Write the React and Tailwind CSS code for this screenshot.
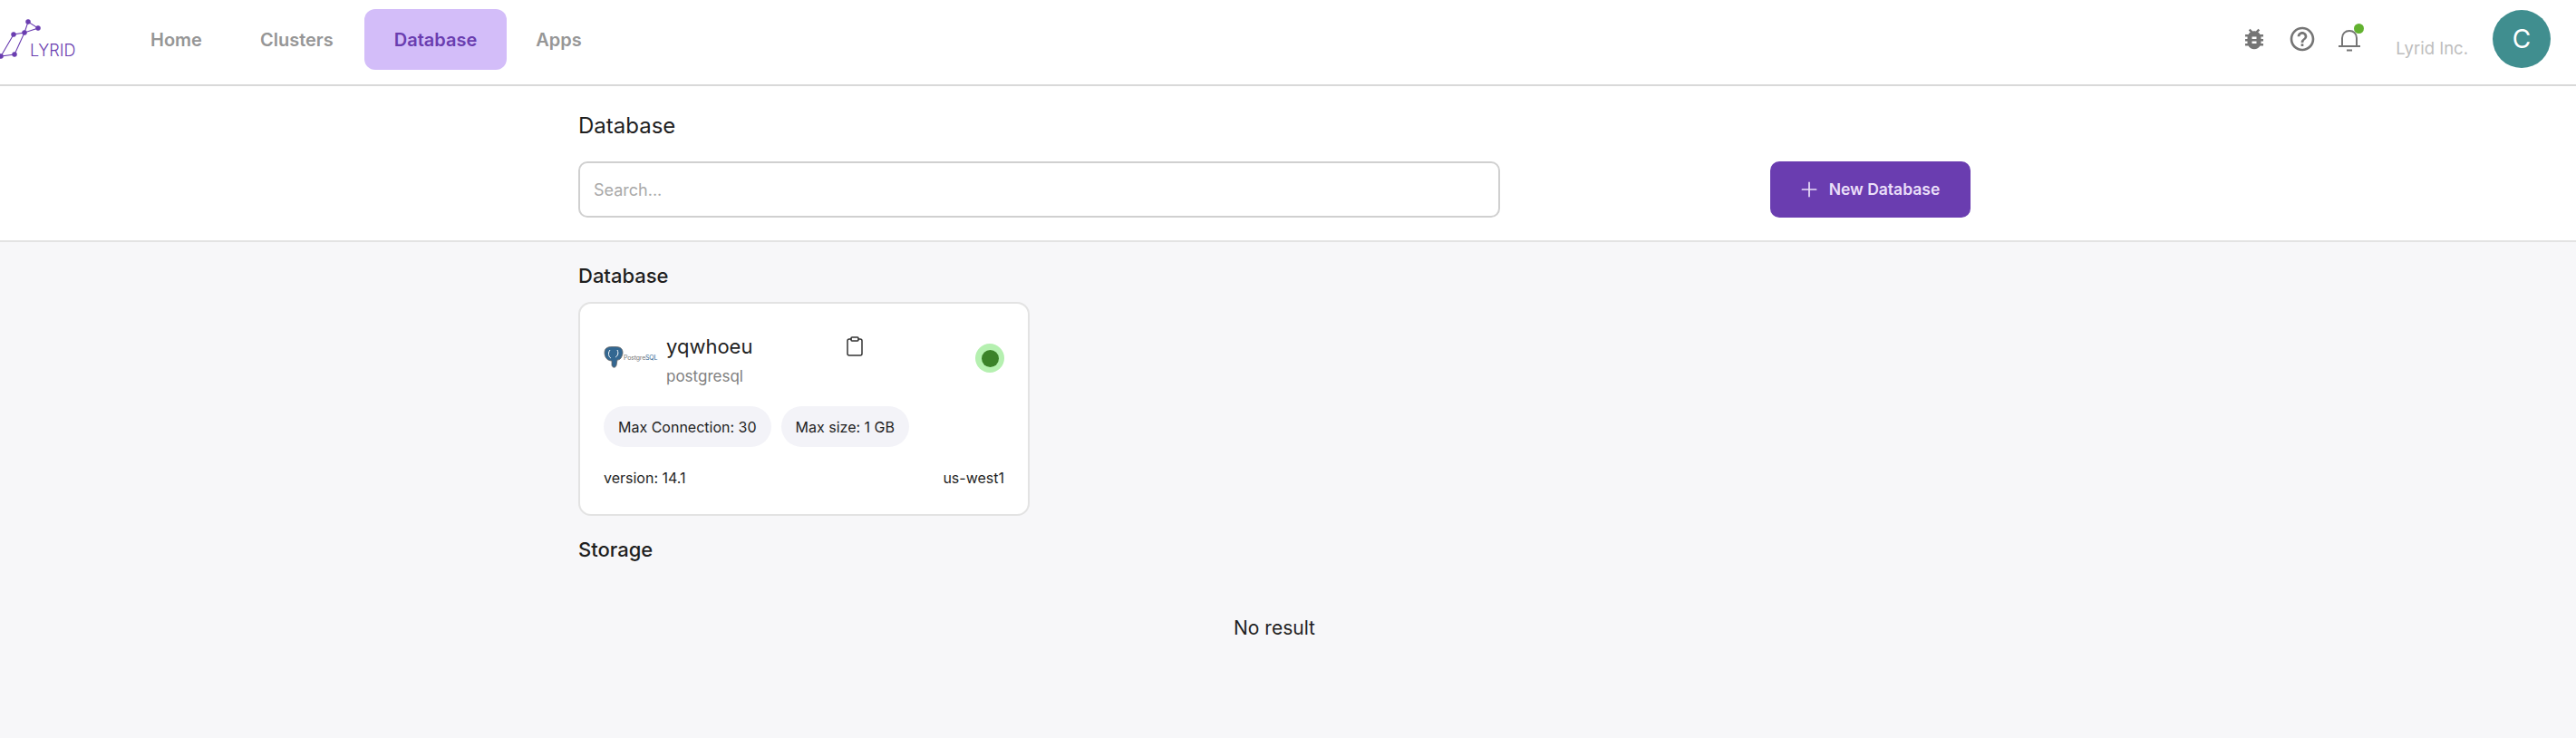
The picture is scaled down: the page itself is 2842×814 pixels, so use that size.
import { Plus, Clipboard } from 'lucide-react'
import { MdBugReport, MdHelpOutline } from 'react-icons/md'

const links = ['Home', 'Clusters', 'Database', 'Apps']

function Logo() {
  return (
    <div className="relative w-[90px] h-[60px] shrink-0">
      <svg width="50" height="60" viewBox="0 0 50 60" className="absolute left-0 top-0" fill="#6a3db0" stroke="#6a3db0" strokeWidth="1.1">
        <path d="M1 48 L15 24 L27 22 L16 46 Z M27 22 L31 10 L42 17 Z" fill="none" />
        <circle cx="1" cy="48" r="2.2" />
        <circle cx="16" cy="46" r="2.2" />
        <circle cx="15" cy="24" r="2.2" />
        <circle cx="27" cy="22" r="2.2" />
        <circle cx="31" cy="10" r="2.2" />
        <circle cx="42" cy="17" r="2.2" />
      </svg>
      <span className="absolute left-[33px] top-[30px] text-[18px] leading-6 font-light text-[#6a3db0]">LYRID</span>
    </div>
  )
}

function BellIcon() {
  return (
    <svg width="28" height="28" viewBox="0 0 28 28" fill="none" stroke="#757575" strokeWidth="2">
      <path d="M2 22 H26" />
      <path d="M6 22 V13 C6 8 9.5 5 14 5 C18.5 5 22 8 22 13 V22" />
      <path d="M11 26.5 H17" />
    </svg>
  )
}

function PgLogo() {
  return (
    <div className="flex items-center w-[60px] shrink-0 self-center mt-[-6px]">
      <svg width="22" height="24" viewBox="0 0 22 24" className="shrink-0">
        <path d="M5 1 C8 0 14 0 17 1 C21 2 22 7 20 11 C19 14 17 15 15 15 L14 21 C13 24 10 24 9 21 L9 16 C4 16 1 12 1 7 C1 4 2 2 5 1 Z" fill="#336791" stroke="#666" strokeWidth="0.8" />
        <path d="M7 4 C4 8 6 12 8 13 M15 4 C17 8 15 11 13 12" fill="none" stroke="#fff" strokeWidth="1" />
      </svg>
      <span className="text-[7px] leading-none whitespace-nowrap tracking-[-0.2px] text-[#777]">Postgre<span className="text-[#336791]">SQL</span></span>
    </div>
  )
}

export default function App() {
  return (
    <div className="min-h-[814px] flex flex-col bg-[#f7f7f9] font-['Inter',sans-serif] text-[#1f1f1f]">
      <nav className="h-[95px] bg-white border-b-2 border-[#d9d9d9] flex items-start shrink-0">
        <div className="pt-[14px]">
          <Logo />
        </div>
        <div className="flex items-center ml-[44px] mt-[10px]">
          {links.map(l => (
            <a key={l} className={l === 'Database'
              ? 'ml-[2px] h-[67px] px-[33px] rounded-[12px] bg-[#d3bdf9] text-[#6a3db0] text-[20px] font-semibold flex items-center'
              : 'h-[67px] px-[32px] text-[#969696] text-[20px] font-semibold flex items-center'}>
              {l}
            </a>
          ))}
        </div>
        <div className="ml-auto flex items-center mt-[11px] pr-[28px]">
          <MdBugReport size={30} color="#757575" />
          <MdHelpOutline size={32} color="#757575" className="ml-[22px]" />
          <div className="relative ml-[22px]">
            <BellIcon />
            <span className="absolute -top-[3px] right-[-2px] w-[11px] h-[11px] rounded-full bg-[#62b22f]" />
          </div>
          <span className="ml-[37px] mt-[21px] text-[18.5px] text-[#bdbdbd]">Lyrid Inc.</span>
          <div className="ml-[27px] w-[64px] h-[64px] rounded-full bg-[#408e8f] text-white text-[28px] flex items-center justify-center">C</div>
        </div>
      </nav>

      <header className="h-[172px] bg-white border-b-2 border-[#e3e3e3] shrink-0 pl-[638px] pt-[28px]">
        <h1 className="text-[24px] leading-8 font-normal">Database</h1>
        <div className="flex items-center mt-[23px] w-[1536px]">
          <input placeholder="Search..." className="w-[1017px] h-[62px] px-[15px] bg-white border-2 border-[#d0d0d0] rounded-[10px] text-[18px] outline-none placeholder-[#a9a9a9]" />
          <button className="ml-auto w-[221px] h-[62px] pr-[4px] rounded-[10px] bg-[#6a3db0] text-[#eadff9] text-[17.5px] font-semibold flex items-center justify-center gap-[9px]">
            <Plus size={26} strokeWidth={1.6} />
            New Database
          </button>
        </div>
      </header>

      <main className="pl-[638px] pt-[23px] flex flex-col w-[2174px]">
        <h2 className="text-[22px] leading-7 font-medium">Database</h2>
        <div className="mt-[15px] w-[498px] h-[236px] bg-white border-2 border-[#e3e3e3] rounded-[14px] px-[26px] pt-[32px]">
          <div className="flex items-start">
            <PgLogo />
            <div className="ml-[9px] w-[96px] overflow-hidden">
              <div className="text-[22px] leading-[30px] whitespace-nowrap">yqwhoeuc</div>
              <div className="mt-[6px] text-[17px] leading-6 text-[#808080]">postgresql</div>
            </div>
            <Clipboard size={24} strokeWidth={1.5} className="ml-[100px] mt-[3px] text-[#333]" />
            <div className="ml-auto mt-[12px] w-[32px] h-[32px] rounded-full bg-[#b5f0b0] flex items-center justify-center">
              <span className="w-[19px] h-[19px] rounded-full bg-[#3b8229]" />
            </div>
          </div>
          <div className="flex gap-[11px] mt-[21px]">
            <span className="h-[45px] px-[16px] rounded-full bg-[#f3f3f8] text-[16px] flex items-center">Max Connection: 30</span>
            <span className="h-[45px] px-[16px] rounded-full bg-[#f3f3f8] text-[16px] flex items-center">Max size: 1 GB</span>
          </div>
          <div className="flex justify-between mt-[22px] text-[16px] leading-6">
            <span>version: 14.1</span>
            <span>us-west1</span>
          </div>
        </div>
        <h2 className="mt-[23px] text-[22px] leading-7 font-medium">Storage</h2>
        <p className="mt-[59px] text-center text-[21px] leading-7">No result</p>
      </main>
    </div>
  )
}
